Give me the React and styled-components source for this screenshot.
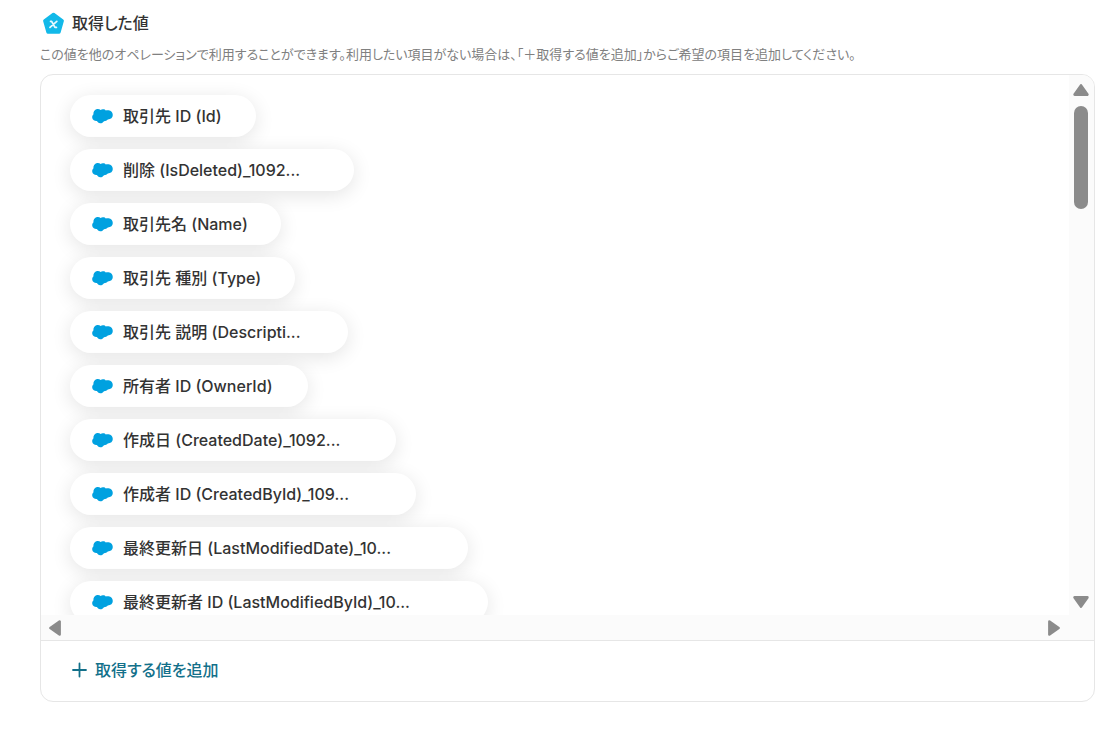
import styled, { createGlobalStyle } from "styled-components";

const fields = [
  { name: "取引先 ID (Id)", width: 186 },
  { name: "削除 (IsDeleted)_1092...", width: 284 },
  { name: "取引先名 (Name)", width: 211 },
  { name: "取引先 種別 (Type)", width: 225 },
  { name: "取引先 説明 (Descripti...", width: 278 },
  { name: "所有者 ID (OwnerId)", width: 238 },
  { name: "作成日 (CreatedDate)_1092...", width: 326 },
  { name: "作成者 ID (CreatedById)_109...", width: 346 },
  { name: "最終更新日 (LastModifiedDate)_10...", width: 398 },
  { name: "最終更新者 ID (LastModifiedById)_10...", width: 418 },
];

const ValueIcon = () => (
  <svg width="23" height="22" viewBox="0 0 23 22" aria-hidden="true">
    <path
      d="M11.5 2.4 L20.2 8.8 L17 20 H6 L2.8 8.8 Z"
      fill="#12b9e9"
      stroke="#12b9e9"
      strokeWidth="3.4"
      strokeLinejoin="round"
    />
    <path
      d="M8.6 9.4 H9.6 L13 15.4 H14.4 M14.8 9.4 L8 15.4"
      fill="none"
      stroke="#e8f9ff"
      strokeWidth="1.8"
      strokeLinecap="round"
      strokeLinejoin="round"
    />
  </svg>
);

const CloudIcon = () => (
  <svg width="21" height="18" viewBox="0 0 21 18" aria-hidden="true">
    <path
      d="M8.6 2.9 C9.3 2.3 10.3 2.1 11.3 2.2 C12.4 2.2 13.2 2.7 13.8 3.5 C14.6 3.2 15.6 3.1 16.6 3.3 C19.1 3.7 20.8 5.6 20.8 7.9 C20.8 10.5 18.8 12.2 15.8 12.5 C14.8 13.6 13.5 14.2 12 14.2 C11 15.6 9.6 16.4 8.1 16.2 C6.6 16 5.6 15.2 4.9 14 C2.6 14.2 .3 12.9 .2 10.5 C.1 9.2 .6 8.2 1.4 7.5 C1.2 5 2.5 2.5 5 2.1 C6.4 1.9 7.7 2.2 8.6 2.9 Z"
      fill="#00a1e0"
    />
  </svg>
);

const Arrow = () => (
  <svg width="18" height="14" viewBox="0 0 18 14" aria-hidden="true">
    <path
      d="M9 2.4 L15.4 11.6 H2.6 Z"
      fill="#8b8b8b"
      stroke="#8b8b8b"
      strokeWidth="2.6"
      strokeLinejoin="round"
    />
  </svg>
);

const PlusIcon = () => (
  <svg width="15" height="16" viewBox="0 0 15 16" aria-hidden="true">
    <path
      d="M7.5 1.5 V14.5 M1 8 H14"
      stroke="#12708a"
      strokeWidth="1.8"
      strokeLinecap="round"
    />
  </svg>
);

const App = () => {
  return (
    <>
      <GlobalStyle />
      <Section>
        <Heading>
          <ValueIcon />
          <Title>取得した値</Title>
        </Heading>
        <Description>
          この値を他のオペレーションで利用することができます。利用したい項目がない場合は、「＋取得する値を追加」からご希望の項目を追加してください。
        </Description>
        <Panel>
          <ScrollArea>
            <FieldList>
              {fields.map(({ name, width }) => (
                <Field key={name} $width={width}>
                  <CloudIcon />
                  <FieldName>{name}</FieldName>
                </Field>
              ))}
            </FieldList>
            <VerticalBar>
              <ArrowButton aria-label="上へ">
                <Arrow />
              </ArrowButton>
              <Thumb />
              <ArrowButton aria-label="下へ" $turn={180}>
                <Arrow />
              </ArrowButton>
            </VerticalBar>
            <HorizontalBar>
              <ArrowButton aria-label="左へ" $turn={270}>
                <Arrow />
              </ArrowButton>
              <ArrowButton aria-label="右へ" $turn={90}>
                <Arrow />
              </ArrowButton>
            </HorizontalBar>
          </ScrollArea>
          <Footer>
            <AddButton>
              <PlusIcon />
              取得する値を追加
            </AddButton>
          </Footer>
        </Panel>
      </Section>
    </>
  );
};

const GlobalStyle = createGlobalStyle`
  * {
    box-sizing: border-box;
  }
  body {
    margin: 0;
    background: #ffffff;
    color: #333333;
    font-family: Inter, "Noto Sans CJK JP", sans-serif;
    font-feature-settings: "palt";
  }
  button {
    border: 0;
    padding: 0;
    background: none;
    font: inherit;
    font-feature-settings: inherit;
    cursor: pointer;
  }
`;

const Section = styled.section`
  padding: 12px 16px 30px 40px;
`;

const Heading = styled.header`
  display: flex;
  align-items: center;
  gap: 7px;
  padding-left: 2px;
`;

const Title = styled.h2`
  margin: 0;
  font-size: 16px;
  font-weight: 500;
  line-height: 22px;
`;

const Description = styled.p`
  margin: 10px 0;
  color: #808080;
  font-size: 13px;
  line-height: 20px;
`;

const Panel = styled.div`
  border: 1px solid #e6e6e6;
  border-radius: 13px;
  overflow: hidden;
`;

const ScrollArea = styled.div`
  display: grid;
  grid-template-columns: 1fr 25px;
  grid-template-rows: 540px 25px;
`;

const FieldList = styled.ul`
  display: flex;
  flex-direction: column;
  align-items: flex-start;
  gap: 12px;
  margin: 0;
  padding: 20px 29px;
  list-style: none;
  overflow: hidden;
`;

const Field = styled.li`
  display: flex;
  flex-shrink: 0;
  align-items: center;
  gap: 10px;
  width: ${({ $width }) => $width}px;
  height: 42px;
  padding-left: 22px;
  border-radius: 21px;
  background: #ffffff;
  box-shadow: 0 4px 20px rgba(0, 0, 0, 0.11);
  white-space: nowrap;
`;

const FieldName = styled.span`
  padding-bottom: 2px;
  font-size: 16px;
  font-weight: 500;
`;

const VerticalBar = styled.div`
  display: flex;
  flex-direction: column;
  align-items: center;
  padding: 8px 1px 6px 0;
  background: #fbfbfb;
`;

const HorizontalBar = styled.div`
  display: flex;
  grid-column: 1 / -1;
  align-items: center;
  justify-content: space-between;
  padding: 0 31px 0 5px;
  background: #fbfbfb;
`;

const ArrowButton = styled.button`
  display: flex;
  transform: rotate(${({ $turn = 0 }) => $turn}deg);
`;

const Thumb = styled.div`
  width: 14px;
  height: 103px;
  margin: 9px 0 auto;
  border-radius: 7px;
  background: #8b8b8b;
`;

const Footer = styled.footer`
  padding: 17px 31px 19px;
  border-top: 1px solid #e6e6e6;
`;

const AddButton = styled.button`
  display: flex;
  align-items: center;
  gap: 8px;
  color: #12708a;
  font-size: 16px;
  font-weight: 500;
  line-height: 24px;
`;

export default App;
